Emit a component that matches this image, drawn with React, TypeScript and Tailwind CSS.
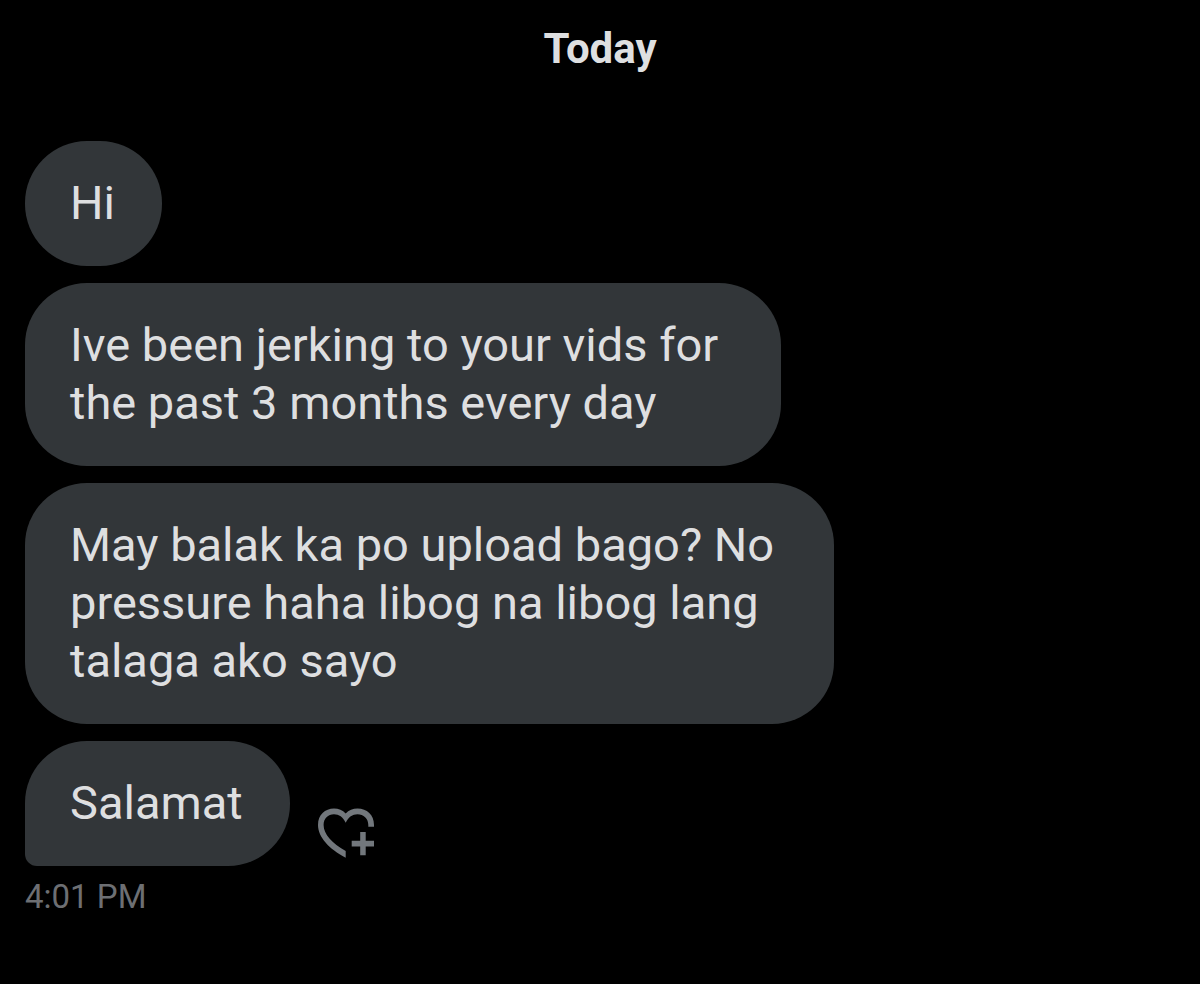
import clsx from 'clsx';

interface Message {
  id: number;
  lines: string[];
  width: string;
}

const MESSAGES: Message[] = [
  { id: 1, lines: ['Hi'], width: 'w-[137px]' },
  {
    id: 2,
    lines: ['Ive been jerking to your vids for', 'the past 3 months every day'],
    width: 'w-[756px]',
  },
  {
    id: 3,
    lines: ['May balak ka po upload bago? No', 'pressure haha libog na libog lang', 'talaga ako sayo'],
    width: 'w-[809px]',
  },
  { id: 4, lines: ['Salamat'], width: 'w-[265px]' },
];

function AddReactionIcon() {
  return (
    <svg viewBox="0 0 58 52" className="w-[58px] h-[52px]" fill="currentColor" aria-hidden="true">
      {/* Open heart */}
      <path d="M27.7 49.7C11 41 0 29 0 17C0 7 7 .6 16 .6C20.5 .6 24.7 2.4 27.7 5.5C30.7 2.4 35 .6 39.5 .6C49 .6 56 7 56 17V18.7H50.3V17C50.3 10.5 45.5 6.2 39.5 6.2C34.5 6.2 30.5 9 27.7 14.7C25 9 21 6.2 16 6.2C10 6.2 5.6 10.5 5.6 17C5.6 26 14 35.5 27.7 43Z" />
      {/* Plus */}
      <path d="M42.2 24H47.7V32.8H56V38.5H47.7V47.3H42.2V38.5H33.7V32.8H42.2Z" />
    </svg>
  );
}

function Bubble({ message, isLast }: { message: Message; isLast: boolean }) {
  return (
    <div
      className={clsx(
        'max-w-full bg-[#323639] pt-[33px] pb-[34px] pl-[45px] text-[47px] leading-[58px] whitespace-nowrap text-[#dedfe0]',
        message.width,
        isLast ? 'rounded-[62px] rounded-bl-xl' : 'rounded-[62px]',
      )}
    >
      {message.lines.map((line) => (
        <p key={line}>{line}</p>
      ))}
    </div>
  );
}

export default function App() {
  return (
    <main className="min-h-screen bg-black px-[25px] pt-[25px] pb-16 font-['Roboto',sans-serif]">
      <h1 className="text-center text-[42px] leading-[48px] font-bold text-[#dedfe0]">Today</h1>

      <ul className="mt-[68px] flex flex-col gap-[17px]">
        {MESSAGES.map((message, i) => {
          const isLast = i === MESSAGES.length - 1;
          return (
            <li key={message.id} className="flex items-end gap-7">
              <Bubble message={message} isLast={isLast} />
              {isLast && (
                <button aria-label="Add reaction" className="mb-1.5 text-[#72777c]">
                  <AddReactionIcon />
                </button>
              )}
            </li>
          );
        })}
      </ul>

      <time className="mt-2.5 block text-[33px] leading-[42px] text-[#6d6f73]">4:01 PM</time>
    </main>
  );
}
